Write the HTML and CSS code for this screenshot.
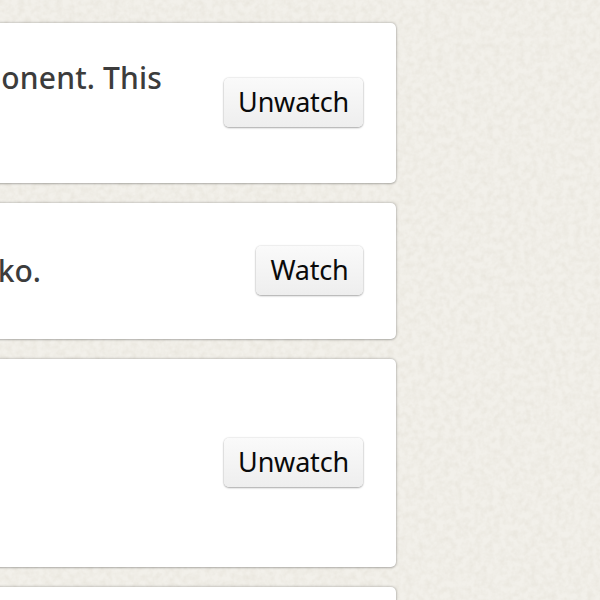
FILE: index.html
```html
<!DOCTYPE html>
<html lang="en">
<head>
<meta charset="utf-8">
<title>Watch list</title>
<link rel="stylesheet" href="styles.css">
</head>
<body>
<svg class="paper" width="600" height="600" aria-hidden="true">
  <filter id="grain" x="0" y="0" width="100%" height="100%">
    <feTurbulence type="fractalNoise" baseFrequency="0.16" numOctaves="3" seed="4"/>
    <feColorMatrix type="matrix" values="0 0 0 0 0.62  0 0 0 0 0.58  0 0 0 0 0.48  0.42 0 0 0 -0.14"/>
  </filter>
  <rect width="600" height="600" filter="url(#grain)"/>
</svg>
<main class="list">
  <article class="card card-tall">
    <p class="text text-top">A small reusable component. This</p>
    <button class="btn">Unwatch</button>
  </article>
  <article class="card card-short">
    <p class="text">Bindings for Knockout with ko.</p>
    <button class="btn">Watch</button>
  </article>
  <article class="card card-large">
    <p class="text"></p>
    <button class="btn">Unwatch</button>
  </article>
  <article class="card card-last"></article>
</main>
</body>
</html>
```
FILE: styles.css
```css
html, body {
  margin: 0;
  height: 600px;
  overflow: hidden;
  background: #f2f0ea;
}
body {
  font-family: "Noto Sans", "Open Sans", sans-serif;
  position: relative;
}
.paper {
  position: absolute;
  inset: 0;
}
.list {
  position: relative;
  width: 796px;
  margin-left: -400px;
  padding-top: 23px;
  display: flex;
  flex-direction: column;
  gap: 20px;
}
.card {
  display: flex;
  align-items: center;
  justify-content: space-between;
  box-sizing: border-box;
  padding-right: 33px;
  background: #fff;
  border-radius: 5px;
  box-shadow: 0 0 3px rgba(0, 0, 0, 0.32), 0 1px 2px rgba(0, 0, 0, 0.14);
}
.card-tall { height: 160px; }
.card-short { height: 136px; }
.card-large { height: 208px; }
.card-last { height: 60px; }
.text {
  flex: 1;
  margin: 0;
  font-size: 30px;
  font-weight: 500;
  line-height: 44px;
  color: #3c3c3c;
  text-align: right;
  white-space: nowrap;
}
.card-tall .text {
  padding-right: 62px;
  letter-spacing: 0.15px;
}
.card-short .text { padding-right: 215px; }
.text-top {
  align-self: flex-start;
  margin-top: 33px;
}
.btn {
  box-sizing: border-box;
  width: 139px;
  height: 49px;
  padding: 0 0 2px;
  margin-top: -2px;
  font: 400 27px/1 "Noto Sans", "Open Sans", sans-serif;
  letter-spacing: -0.2px;
  color: #0a0a0a;
  background: linear-gradient(#fafafa, #eeeeee);
  border: 0;
  border-radius: 5px;
  box-shadow: 0 0 2px rgba(0, 0, 0, 0.2), 0 1px 2px rgba(0, 0, 0, 0.3);
}
.card-short .btn { width: 107px; }
```
